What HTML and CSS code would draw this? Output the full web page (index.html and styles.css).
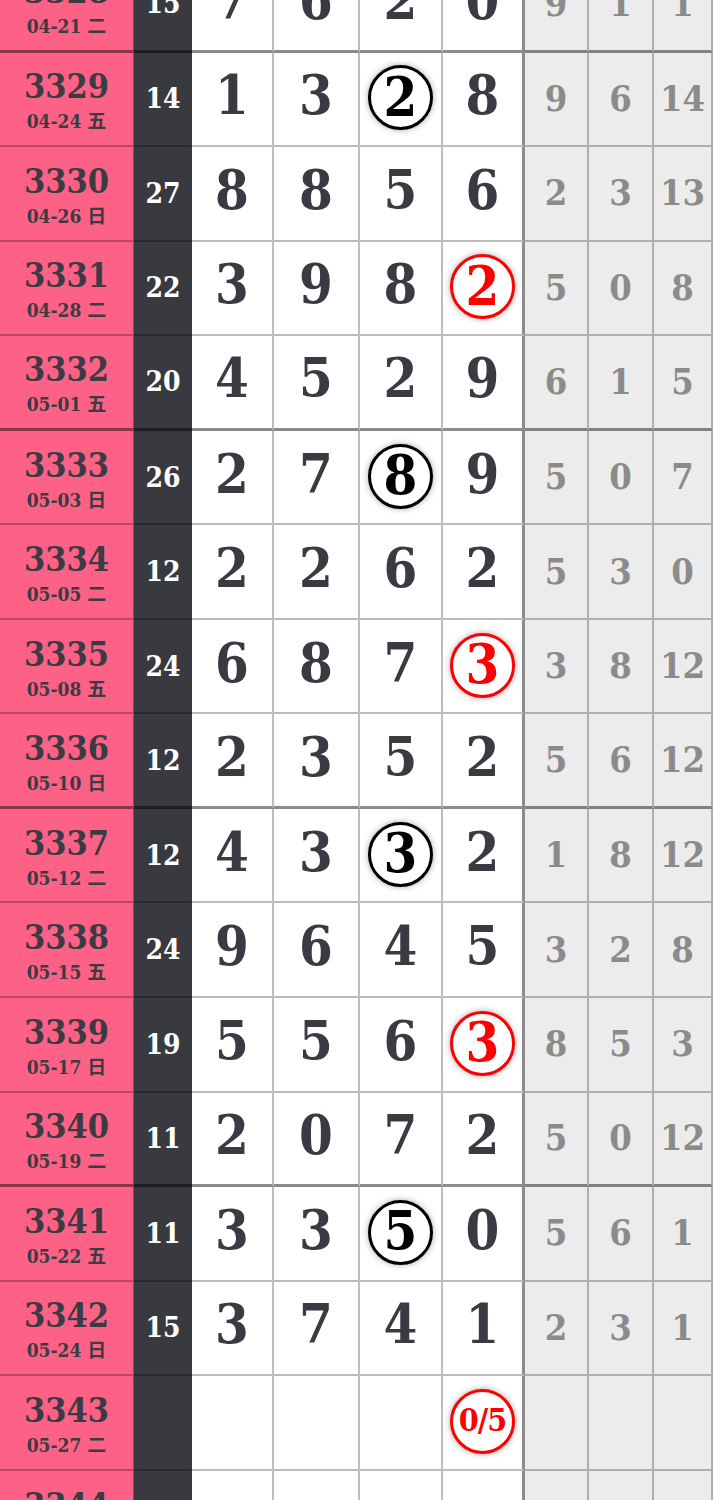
FILE: index.html
```html
<html>
<head>
<meta charset="utf-8">
<link rel="stylesheet" href="styles.css">
</head>
<body>
<div class="board">
	<div class="row grp-end">
		<div class="qi"><b>3328</b><span>04-21 二</span></div>
		<div class="he">15</div>
		<div class="n">7</div><div class="n">6</div><div class="n">2</div><div class="n last">0</div>
		<div class="g">9</div><div class="g">1</div><div class="g">1</div>
	</div>
	<div class="row">
		<div class="qi"><b>3329</b><span>04-24 五</span></div>
		<div class="he">14</div>
		<div class="n">1</div><div class="n">3</div><div class="n"><i class="ring">2</i></div><div class="n last">8</div>
		<div class="g">9</div><div class="g">6</div><div class="g">14</div>
	</div>
	<div class="row">
		<div class="qi"><b>3330</b><span>04-26 日</span></div>
		<div class="he">27</div>
		<div class="n">8</div><div class="n">8</div><div class="n">5</div><div class="n last">6</div>
		<div class="g">2</div><div class="g">3</div><div class="g">13</div>
	</div>
	<div class="row">
		<div class="qi"><b>3331</b><span>04-28 二</span></div>
		<div class="he">22</div>
		<div class="n">3</div><div class="n">9</div><div class="n">8</div><div class="n last"><i class="ring red">2</i></div>
		<div class="g">5</div><div class="g">0</div><div class="g">8</div>
	</div>
	<div class="row grp-end">
		<div class="qi"><b>3332</b><span>05-01 五</span></div>
		<div class="he">20</div>
		<div class="n">4</div><div class="n">5</div><div class="n">2</div><div class="n last">9</div>
		<div class="g">6</div><div class="g">1</div><div class="g">5</div>
	</div>
	<div class="row">
		<div class="qi"><b>3333</b><span>05-03 日</span></div>
		<div class="he">26</div>
		<div class="n">2</div><div class="n">7</div><div class="n"><i class="ring">8</i></div><div class="n last">9</div>
		<div class="g">5</div><div class="g">0</div><div class="g">7</div>
	</div>
	<div class="row">
		<div class="qi"><b>3334</b><span>05-05 二</span></div>
		<div class="he">12</div>
		<div class="n">2</div><div class="n">2</div><div class="n">6</div><div class="n last">2</div>
		<div class="g">5</div><div class="g">3</div><div class="g">0</div>
	</div>
	<div class="row">
		<div class="qi"><b>3335</b><span>05-08 五</span></div>
		<div class="he">24</div>
		<div class="n">6</div><div class="n">8</div><div class="n">7</div><div class="n last"><i class="ring red">3</i></div>
		<div class="g">3</div><div class="g">8</div><div class="g">12</div>
	</div>
	<div class="row grp-end">
		<div class="qi"><b>3336</b><span>05-10 日</span></div>
		<div class="he">12</div>
		<div class="n">2</div><div class="n">3</div><div class="n">5</div><div class="n last">2</div>
		<div class="g">5</div><div class="g">6</div><div class="g">12</div>
	</div>
	<div class="row">
		<div class="qi"><b>3337</b><span>05-12 二</span></div>
		<div class="he">12</div>
		<div class="n">4</div><div class="n">3</div><div class="n"><i class="ring">3</i></div><div class="n last">2</div>
		<div class="g">1</div><div class="g">8</div><div class="g">12</div>
	</div>
	<div class="row">
		<div class="qi"><b>3338</b><span>05-15 五</span></div>
		<div class="he">24</div>
		<div class="n">9</div><div class="n">6</div><div class="n">4</div><div class="n last">5</div>
		<div class="g">3</div><div class="g">2</div><div class="g">8</div>
	</div>
	<div class="row">
		<div class="qi"><b>3339</b><span>05-17 日</span></div>
		<div class="he">19</div>
		<div class="n">5</div><div class="n">5</div><div class="n">6</div><div class="n last"><i class="ring red">3</i></div>
		<div class="g">8</div><div class="g">5</div><div class="g">3</div>
	</div>
	<div class="row grp-end">
		<div class="qi"><b>3340</b><span>05-19 二</span></div>
		<div class="he">11</div>
		<div class="n">2</div><div class="n">0</div><div class="n">7</div><div class="n last">2</div>
		<div class="g">5</div><div class="g">0</div><div class="g">12</div>
	</div>
	<div class="row">
		<div class="qi"><b>3341</b><span>05-22 五</span></div>
		<div class="he">11</div>
		<div class="n">3</div><div class="n">3</div><div class="n"><i class="ring">5</i></div><div class="n last">0</div>
		<div class="g">5</div><div class="g">6</div><div class="g">1</div>
	</div>
	<div class="row">
		<div class="qi"><b>3342</b><span>05-24 日</span></div>
		<div class="he">15</div>
		<div class="n">3</div><div class="n">7</div><div class="n">4</div><div class="n last">1</div>
		<div class="g">2</div><div class="g">3</div><div class="g">1</div>
	</div>
	<div class="row">
		<div class="qi"><b>3343</b><span>05-27 二</span></div>
		<div class="he"></div>
		<div class="n"></div><div class="n"></div><div class="n"></div><div class="n last"><i class="ring red small">0/5</i></div>
		<div class="g"></div><div class="g"></div><div class="g"></div>
	</div>
	<div class="row">
		<div class="qi"><b>3344</b><span>05-29 日</span></div>
		<div class="he"></div>
		<div class="n"></div><div class="n"></div><div class="n"></div><div class="n last"></div>
		<div class="g"></div><div class="g"></div><div class="g"></div>
	</div>
</div>
</body>
</html>
```

FILE: styles.css
```css
*{
	margin: 0px;
	padding: 0px;
	box-sizing: border-box;
}
body{
	background: white;
	font-family: "DejaVu Serif", "Noto Sans CJK SC", serif;
	font-weight: bold;
	overflow: hidden;
}
.board{
	margin-top: -42px;
}
.row{
	display: grid;
	grid-template-columns: 134px 58px 82px 86px 83px 82px 64px 65px 1fr;
	height: 94.55px;
}
.row > div{
	display: flex;
	align-items: center;
	justify-content: center;
	border-bottom: 2px solid rgba(0,0,0,0.26);
}
.row.grp-end > div{
	border-bottom: 3px solid rgba(0,0,0,0.45);
}
.qi{
	background: #fe6186;
	color: #3b3b44;
	flex-direction: column;
	border-right: 1px solid rgba(0,0,0,0.35);
	padding-top: 5px;
}
.qi b{
	font-size: 34px;
	line-height: 40px;
	font-stretch: condensed;
}
.qi span{
	font-size: 19px;
	line-height: 30px;
	font-stretch: condensed;
}
.he{
	background: #393a40;
	color: white;
	font-size: 28px;
	font-stretch: condensed;
	box-shadow: 1px 0px 2px rgba(0,0,0,0.3);
}
.n{
	background: white;
	color: #3a3a42;
	font-size: 54px;
	font-stretch: condensed;
	border-right: 2px solid rgba(0,0,0,0.26);
	padding-bottom: 7px;
}
.n.last{
	border-right: 3px solid rgba(0,0,0,0.45);
}
.g{
	background: #ececec;
	color: #8b8b8b;
	font-size: 36px;
	font-stretch: condensed;
	border-right: 2px solid rgba(0,0,0,0.26);
	padding-bottom: 2px;
}
.ring{
	font-style: normal;
	display: flex;
	align-items: center;
	justify-content: center;
	width: 65px;
	height: 65px;
	border: 3px solid black;
	border-radius: 50%;
	color: black;
	background: white;
	box-shadow: 0px 0px 6px rgba(0,0,0,0.35);
	margin-top: 5px;
	padding-bottom: 2px;
}
.ring.red{
	border-color: #ff0000;
	color: #ff0000;
}
.ring.small{
	font-size: 32px;
	letter-spacing: -1px;
}
```
